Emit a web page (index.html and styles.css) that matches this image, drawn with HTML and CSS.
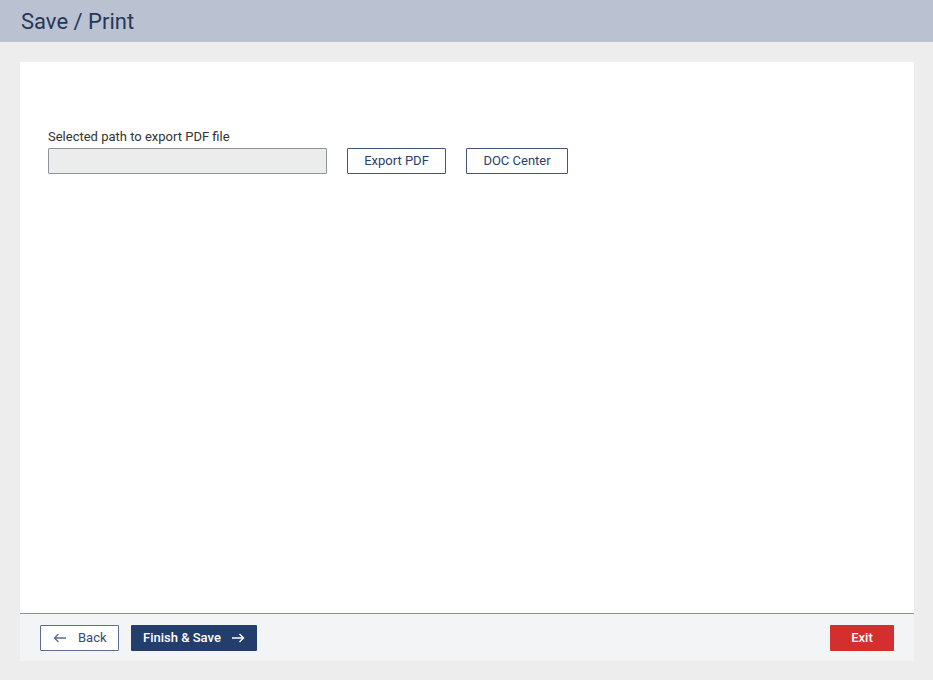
FILE: index.html
```html
<!DOCTYPE html>
<html>
<head>
<meta charset="utf-8">
<link rel="stylesheet" href="styles.css">
</head>
<body>
<header class="topbar"><h1 class="title">Save / Print</h1></header>
<main class="page">
  <section class="card">
    <div class="content">
      <label class="label">Selected path to export PDF file</label>
      <div class="row">
        <div class="path-input"></div>
        <button class="btn-outline btn-export">Export PDF</button>
        <button class="btn-outline btn-doc">DOC Center</button>
      </div>
    </div>
    <footer class="footer">
      <div class="footer-left">
        <button class="btn-back">
          <svg class="ico" width="14" height="10" viewBox="0 0 14 10"><path d="M13 5H1.5M5.5 1L1.5 5L5.5 9" fill="none" stroke="#5d6d8f" stroke-width="1.3"/></svg>
          <span>Back</span>
        </button>
        <button class="btn-primary">
          <span>Finish &amp; Save</span>
          <svg class="ico" width="14" height="10" viewBox="0 0 14 10"><path d="M1 5H12.5M8.5 1L12.5 5L8.5 9" fill="none" stroke="#ffffff" stroke-width="1.4"/></svg>
        </button>
      </div>
      <button class="btn-exit">Exit</button>
    </footer>
  </section>
</main>
</body>
</html>
```
FILE: styles.css
```css
* { box-sizing: border-box; }
html, body { margin: 0; padding: 0; }
body {
  background: #ededed;
  font-family: Roboto, "Liberation Sans", Arial, sans-serif;
  width: 933px;
  height: 680px;
  overflow: hidden;
}
.topbar {
  height: 42px;
  background: #bac2d2;
  padding-left: 21px;
  padding-top: 1px;
  display: flex;
  align-items: center;
}
.title {
  margin: 0;
  font-size: 22px;
  font-weight: 400;
  color: #263759;
  line-height: 1;
}
.page {
  padding: 20px 19px 0 20px;
}
.card {
  background: #ffffff;
  height: 599px;
  display: flex;
  flex-direction: column;
}
.content {
  flex: 1;
  padding: 67px 28px 0 28px;
}
.label {
  display: block;
  font-size: 13px;
  color: #333333;
  line-height: 15px;
  margin-bottom: 4px;
}
.row {
  display: flex;
  align-items: center;
}
.path-input {
  width: 279px;
  height: 26px;
  background: #ececec;
  border: 1px solid #8f949c;
  border-radius: 1px;
}
.btn-outline {
  height: 26px;
  background: #ffffff;
  border: 1px solid #44557d;
  border-radius: 1px;
  color: #2b3e6a;
  font-family: inherit;
  font-size: 13px;
  padding: 0 0 2px 0;
  cursor: pointer;
}
.btn-export { width: 99px; margin-left: 20px; }
.btn-doc { width: 102px; margin-left: 20px; }
.footer {
  height: 48px;
  border-top: 1px solid #8590ab;
  background: #f3f4f6;
  display: flex;
  align-items: center;
  justify-content: space-between;
  padding: 0 20px;
}
.footer-left { display: flex; align-items: center; gap: 12px; }
.btn-back {
  width: 79px;
  height: 26px;
  background: #ffffff;
  border: 1px solid #5d6d8f;
  border-radius: 1px;
  color: #3a4a6e;
  font-family: inherit;
  font-size: 13px;
  display: flex;
  align-items: center;
  padding: 0 0 0 12px;
  gap: 11px;
}
.btn-primary {
  width: 126px;
  height: 26px;
  background: #233d6d;
  border: none;
  border-radius: 1px;
  color: #ffffff;
  font-family: inherit;
  font-size: 13px;
  font-weight: 500;
  display: flex;
  align-items: center;
  padding: 0 0 0 12px;
  gap: 10px;
}
.btn-exit {
  width: 64px;
  height: 26px;
  background: #d32f2f;
  border: none;
  border-radius: 1px;
  color: #ffffff;
  font-family: inherit;
  font-size: 13px;
  font-weight: 500;
  padding: 0;
}
.ico { display: block; }
```
